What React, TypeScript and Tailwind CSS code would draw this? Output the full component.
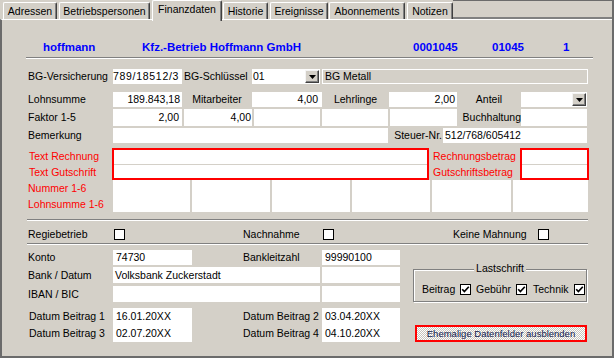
import React from "react";

const font = "font-['Liberation_Sans',Arial,Helvetica,sans-serif]";

function Tab({ label, className }: { label: string; className: string }) {
  return (
    <div
      className={`mt-[2px] h-[17px] flex items-center justify-center rounded-t-[2px] border-l border-t border-l-white border-t-white border-r border-r-[#404040] shadow-[inset_-1px_0_0_#808080] ${className}`}
    >
      {label}
    </div>
  );
}

function DropBtn() {
  return (
    <span className="w-[14px] h-[13px] flex items-center justify-center bg-[#d4d0c8] border-t border-l border-t-[#f4f4f4] border-l-[#f4f4f4] border-r border-b border-r-[#404040] border-b-[#404040] shadow-[inset_-1px_-1px_0_#808080]">
      <svg width="7" height="4" viewBox="0 0 7 4">
        <path d="M0 0h7L3.5 4z" fill="#000" />
      </svg>
    </span>
  );
}

function Box() {
  return <span className="block w-[11px] h-[11px] border border-black bg-white shrink-0" />;
}

function Checked() {
  return (
    <svg width="11" height="11" viewBox="0 0 11 11" className="shrink-0">
      <rect x="0.5" y="0.5" width="10" height="10" fill="#fff" stroke="#000" />
      <path d="M2.2 5.2 L4.4 7.6 L8.8 2.8" fill="none" stroke="#000" strokeWidth="1.7" />
    </svg>
  );
}

const sep = "w-[561px] h-[2px] border-t border-b border-t-[#808080] border-b-white";

export default function App() {
  return (
    <div
      className={`${font} text-[10.5px] leading-[13px] text-black w-[614px] h-[358px] bg-[#d4d0c8] flex flex-col border-r-2 border-r-[#6b6b6b] overflow-hidden`}
    >
      {/* Reiter */}
      <div className="h-[19px] flex items-start shrink-0">
        <Tab label="Adressen" className="ml-[3px] w-[54px]" />
        <Tab label="Betriebspersonen" className="ml-[2px] w-[91px]" />
        <div className="relative z-10 ml-[2px] w-[70px] h-[21px] pt-[2px] flex justify-center leading-[12px] bg-[#d4d0c8] rounded-t-[2px] border-l border-t border-l-white border-t-white border-r border-r-[#404040] shadow-[inset_-1px_0_0_#808080]">
          Finanzdaten
        </div>
        <Tab label="Historie" className="ml-[1px] w-[45px]" />
        <Tab label="Ereignisse" className="ml-[2px] w-[58px]" />
        <Tab label="Abonnements" className="ml-[1px] w-[76px]" />
        <Tab label="Notizen" className="ml-[2px] w-[46px]" />
        <div className="flex-1 h-[19px] border-b-2 border-b-[#808080] shadow-[inset_0_1px_0_#6b6b6b]" />
      </div>

      {/* Panel */}
      <div className="flex-1 border-t border-t-white border-l-2 border-l-[#6b6b6b] border-b-2 border-b-[#6b6b6b] pl-[25px]">
        <div className="mt-[20px] h-[14px] flex pl-[16px] text-[11.5px] leading-[14px] font-bold text-[#0000ff]">
          <span className="w-[99px]">hoffmann</span>
          <span className="w-[271px]">Kfz.-Betrieb Hoffmann GmbH</span>
          <span className="w-[79px]">0001045</span>
          <span className="w-[71px]">01045</span>
          <span>1</span>
        </div>
        <div className="mt-[3px] ml-[-1px] w-[567px] h-[2px] border-t border-b border-t-[#808080] border-b-white" />

        {/* BG-Versicherung */}
        <div className="mt-[10px] h-[15px] flex items-center">
          <div className="w-[86px] pl-[1px]">BG-Versicherung</div>
          <div className="w-[69px] h-full bg-white flex items-center tracking-[0.7px]">789/18512/3</div>
          <div className="w-[70px] pl-[2px]">BG-Schlüssel</div>
          <div className="w-[68px] h-full bg-white flex items-center justify-between pl-[1px] pr-[1px]">
            01
            <DropBtn />
          </div>
          <div className="ml-[2px] w-[266px] h-full border border-white flex items-center pl-[2px]">BG Metall</div>
        </div>

        {/* Lohnsumme */}
        <div className="mt-[8px] h-[15px] flex items-center">
          <div className="w-[86px] pl-[1px]">Lohnsumme</div>
          <div className="w-[69px] h-full bg-white flex items-center justify-end pr-[2px]">189.843,18</div>
          <div className="w-[70px] text-center">Mitarbeiter</div>
          <div className="w-[70px] h-full bg-white flex items-center justify-end pr-[4px]">4,00</div>
          <div className="w-[67px] text-center">Lehrlinge</div>
          <div className="w-[68px] h-full bg-white flex items-center justify-end pr-[2px]">2,00</div>
          <div className="w-[64px] text-center">Anteil</div>
          <div className="w-[66px] h-full bg-white flex items-center justify-end pr-[1px]">
            <DropBtn />
          </div>
        </div>

        {/* Faktor */}
        <div className="mt-[2px] h-[17px] flex items-center">
          <div className="w-[86px] pl-[1px]">Faktor 1-5</div>
          <div className="w-[69px] h-full bg-white flex items-center justify-end pr-[3px]">2,00</div>
          <div className="ml-[2px] w-[68px] h-full bg-white flex items-center justify-end pr-[1px]">4,00</div>
          <div className="ml-[2px] w-[66px] h-full bg-white" />
          <div className="ml-[2px] w-[66px] h-full bg-white" />
          <div className="ml-[2px] w-[67px] h-full bg-white" />
          <div className="w-[64px] text-right">Buchhaltung</div>
          <div className="w-[66px] h-full bg-white" />
        </div>

        {/* Bemerkung */}
        <div className="mt-[2px] h-[15px] flex items-center">
          <div className="w-[86px] pl-[1px]">Bemerkung</div>
          <div className="w-[275px] h-full bg-white" />
          <div className="w-[55px] text-right pr-[1px]">Steuer-Nr.</div>
          <div className="w-[144px] h-full bg-white flex items-center pl-[2px]">512/768/605412</div>
        </div>

        {/* Rechnung / Gutschrift */}
        <div className="mt-[5px] h-[32px] flex text-[#ff0000]">
          <div className="w-[85px] pl-[2px] flex flex-col justify-center leading-[16px]">
            <span>Text Rechnung</span>
            <span>Text Gutschrift</span>
          </div>
          <div className="w-[317px] h-full border-2 border-[#ff0000] flex flex-col">
            <div className="h-[14px] bg-white" />
            <div className="h-px" />
            <div className="flex-1 bg-white" />
          </div>
          <div className="w-[91px] pl-[4px] flex flex-col justify-center leading-[16px]">
            <span>Rechnungsbetrag</span>
            <span>Gutschriftsbetrag</span>
          </div>
          <div className="w-[69px] h-full border-2 border-[#ff0000] flex flex-col">
            <div className="h-[14px] bg-white" />
            <div className="h-px" />
            <div className="flex-1 bg-white" />
          </div>
        </div>

        {/* Nummer / Lohnsumme 1-6 */}
        <div className="h-[32px] flex">
          <div className="w-[86px] pl-[1px] flex flex-col justify-center leading-[16px] text-[#ff0000]">
            <span>Nummer 1-6</span>
            <span>Lohnsumme 1-6</span>
          </div>
          <div className="w-[77px] bg-white" />
          <div className="ml-[2px] w-[78px] bg-white" />
          <div className="ml-[2px] w-[78px] bg-white" />
          <div className="ml-[2px] w-[78px] bg-white" />
          <div className="ml-[2px] w-[79px] bg-white" />
          <div className="ml-[2px] w-[75px] bg-white" />
        </div>

        <div className={`mt-[7px] ${sep}`} />

        {/* Optionen */}
        <div className="mt-[6px] h-[14px] flex items-center">
          <div className="w-[87px] pl-[1px]">Regiebetrieb</div>
          <Box />
          <div className="ml-[118px] w-[80px]">Nachnahme</div>
          <Box />
          <div className="ml-[119px] w-[85px]">Keine Mahnung</div>
          <Box />
        </div>

        <div className={`mt-[2px] ${sep}`} />

        {/* Bank */}
        <div className="mt-[5px] flex">
          <div className="w-[373px] flex flex-col">
            <div className="h-[15px] flex items-center">
              <div className="w-[86px] pl-[1px]">Konto</div>
              <div className="w-[79px] h-full bg-white pl-[3px] flex items-center">74730</div>
              <div className="w-[130px] pl-[51px]">Bankleitzahl</div>
              <div className="w-[78px] h-full bg-white pl-[3px] flex items-center">99990100</div>
            </div>
            <div className="mt-[2px] h-[16px] flex items-center">
              <div className="w-[86px] pl-[1px]">Bank / Datum</div>
              <div className="w-[207px] h-full bg-white pl-[2px] flex items-center">Volksbank Zuckerstadt</div>
              <div className="ml-[2px] w-[78px] h-full bg-white" />
            </div>
            <div className="mt-[3px] h-[16px] flex items-center">
              <div className="w-[86px] pl-[1px]">IBAN / BIC</div>
              <div className="w-[207px] h-full bg-white" />
              <div className="ml-[2px] w-[78px] h-full bg-white" />
            </div>
            <div className="mt-[6px] h-[34px] flex leading-[17px]">
              <div className="w-[86px] pl-[2px] flex flex-col">
                <span>Datum Beitrag 1</span>
                <span>Datum Beitrag 3</span>
              </div>
              <div className="w-[79px] bg-white pl-[3px] flex flex-col">
                <span>16.01.20XX</span>
                <span>02.07.20XX</span>
              </div>
              <div className="w-[130px] pl-[51px] flex flex-col">
                <span>Datum Beitrag 2</span>
                <span>Datum Beitrag 4</span>
              </div>
              <div className="w-[78px] bg-white pl-[3px] flex flex-col">
                <span>03.04.20XX</span>
                <span>04.10.20XX</span>
              </div>
            </div>
          </div>

          <div className="ml-[13px] w-[174px] flex flex-col">
            <div className="relative mt-[19px] h-[33px] border border-[#808080] shadow-[inset_1px_1px_0_#fff,1px_1px_0_#fff] flex items-center pt-[7px] pl-[8px]">
              <span className="absolute left-1/2 -translate-x-1/2 top-[-8px] px-[2px] bg-[#d4d0c8]">Lastschrift</span>
              <span className="w-[38px]">Beitrag</span>
              <Checked />
              <span className="ml-[5px] w-[40px]">Gebühr</span>
              <Checked />
              <span className="ml-[6px] w-[41px]">Technik</span>
              <Checked />
            </div>
            <div className="mt-[23px] ml-[2px] w-[172px] h-[17px] border-2 border-[#ff0000] bg-[image:repeating-conic-gradient(#c8c4bc_0%_25%,#ffffff_0%_50%)] bg-[length:2px_2px] flex items-center justify-center text-[9.5px] text-[#102050]">
              Ehemalige Datenfelder ausblenden
            </div>
          </div>
        </div>
      </div>
    </div>
  );
}
